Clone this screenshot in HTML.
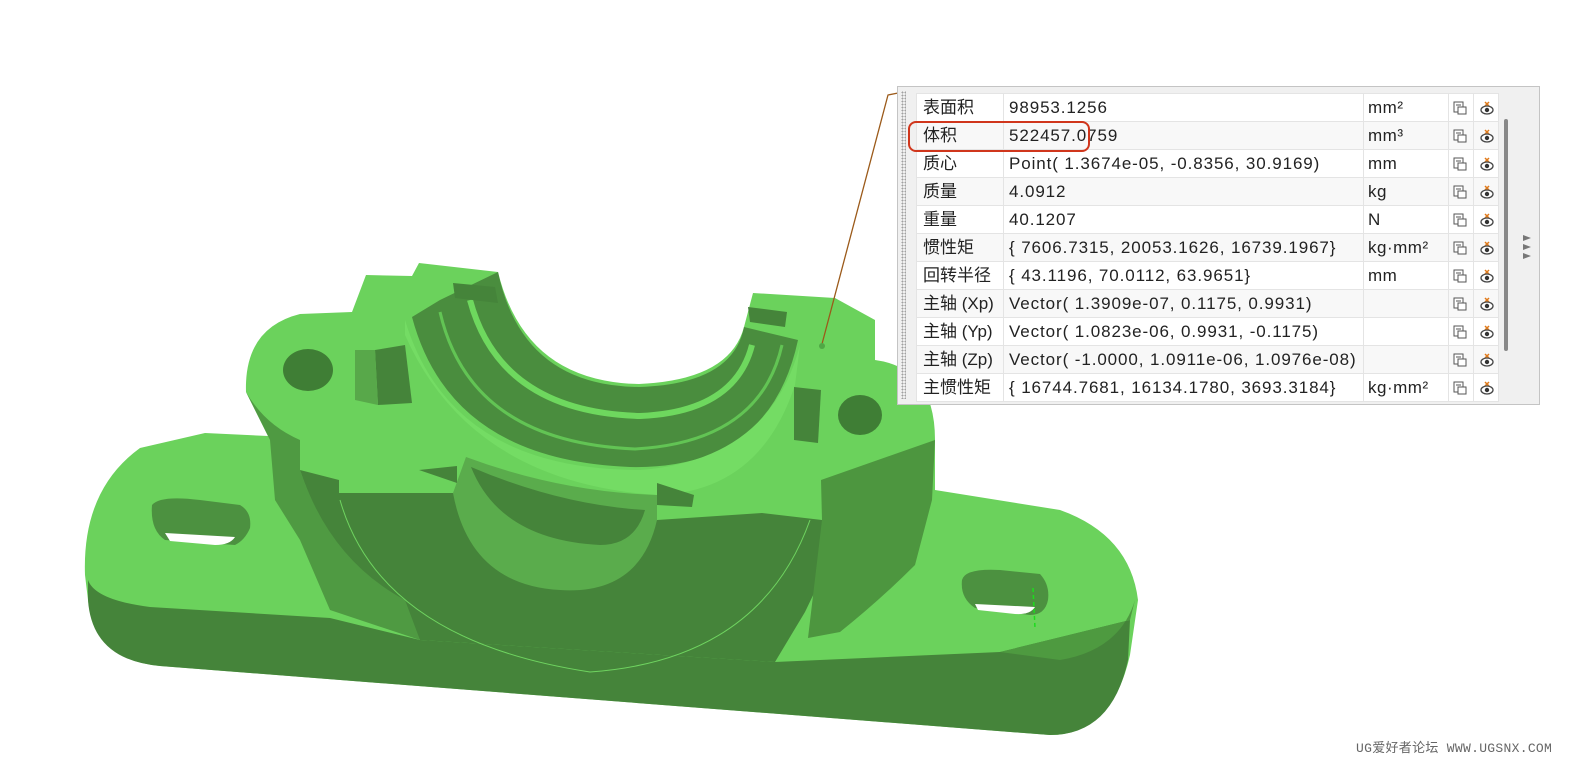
<!DOCTYPE html>
<html><head><meta charset="utf-8"><style>
body{margin:0;width:1580px;height:764px;background:#fff;position:relative;overflow:hidden;font-family:"Liberation Sans","Noto Sans CJK SC",sans-serif}
svg.bg{position:absolute;left:0;top:0}
#panel{position:absolute;left:897px;top:86px;width:643px;height:319px;background:#f0f0f0;border:1px solid #c4c4c4;box-sizing:border-box}
#grip{position:absolute;left:3px;top:4px;width:5px;height:308px;background-image:radial-gradient(#a0a0a0 40%,transparent 41%);background-size:3px 3px}
table{position:absolute;left:18px;top:6px;border-collapse:collapse;background:#fff;font-size:17px;color:#222}
td{height:26.7px;border:1px solid #e4e4e4;padding:0 4px;white-space:nowrap;line-height:27px}
td.l{width:76px;padding-left:6px}td.v{width:350px;letter-spacing:0.9px;padding-left:5px}td.u{width:76px;letter-spacing:0.5px}td.i{width:16px;padding:0 4px}
td svg{display:block}
tr:nth-child(even) td{background:#f8f8f8}
#sb{position:absolute;left:606px;top:32px;width:4px;height:232px;background:#888;border-radius:2px}
.tri{position:absolute;left:625px;width:0;height:0;border-top:3px solid transparent;border-bottom:3px solid transparent;border-left:8px solid #777}
#red{position:absolute;left:908px;top:121px;width:182px;height:31px;border:2px solid #d0361c;border-radius:8px;box-sizing:border-box}
#wm{position:absolute;left:1356px;top:737px;font-family:"Liberation Mono","Noto Sans CJK SC",monospace;font-size:13px;color:#666;letter-spacing:0.3px}
</style></head><body>
<svg class="bg" width="1580" height="764">
<path fill="#6bd25c" d="M85,575 Q82,490 140,448 L205,433 L268,436 L246,392 Q244,328 300,314 L352,312 L366,275 L412,276 L419,263 L498,272 Q525,382 639,384 Q730,380 744,327 L753,293 L835,298 L875,320 L875,360 Q935,368 935,440 L935,490 L1060,510 Q1130,535 1138,600 L1130,655 Q1112,735 1050,735 L160,666 Q95,660 88,600 Z"/>
<path fill="#45843a" d="M88,580 Q95,600 150,607 L330,618 L420,640 L775,662 L1000,652 L1130,620 L1128,660 Q1112,735 1050,735 L160,666 Q92,660 88,600 Z"/>
<path fill="#4e9a40" d="M1000,652 L1130,620 L1135,600 Q1120,650 1060,660 Z"/>
<path fill="#4f9a42" d="M246,392 L270,440 L275,500 L300,540 L330,610 L420,640 L410,600 Q330,560 300,470 L300,440 Q265,425 246,392 Z"/>
<path fill="#45843a" d="M300,470 L339,480 L339,493 L453,493 L657,520 L762,513 L822,520 L830,560 L805,612 L775,662 L420,640 L405,600 Q330,560 300,470 Z"/>
<path fill="none" stroke="#6fd460" stroke-width="1" d="M340,500 Q380,640 590,672 Q760,660 810,520"/>
<path fill="#4d963f" d="M821,480 L935,440 L932,500 L915,565 Q880,600 840,632 L808,638 L822,520 Z"/>
<!-- bowl -->
<path fill="#4a8d3e" d="M412,317 L440,300 L498,272 Q522,386 639,387 Q733,384 744,327 L798,340 Q770,470 630,467 Q450,460 412,317 Z"/>
<path fill="none" stroke="#6ed85e" stroke-width="6" d="M470,300 Q500,412 640,416 Q735,412 752,345"/>
<path fill="none" stroke="#62c454" stroke-width="3" d="M440,312 Q470,442 635,449 Q760,442 782,345"/>
<path fill="#74dc64" d="M405,320 Q450,470 640,470 Q770,460 800,345 L795,385 Q760,492 657,495 Q470,482 405,335 Z"/>
<path fill="#5aac4c" d="M453,493 Q470,585 560,590 Q640,595 657,520 L657,495 Q560,492 466,457 Z"/>
<path fill="#45843a" d="M471,467 Q500,540 600,545 Q635,545 645,510 Q560,505 471,467 Z"/>
<path fill="#45843a" d="M375,350 L405,345 L412,403 L378,405 Z"/>
<path fill="#58a84a" d="M355,350 L375,350 L378,405 L355,400 Z"/>
<path fill="#45843a" d="M453,283 L495,287 L498,303 L455,298 Z"/>
<path fill="#45843a" d="M748,307 L787,312 L785,327 L750,322 Z"/>
<path fill="#45843a" d="M794,387 L821,390 L818,443 L794,440 Z"/>
<path fill="#45843a" d="M657,483 L694,495 L692,507 L657,505 Z"/>
<path fill="#45843a" d="M419,470 L457,466 L457,483 Z"/>
<ellipse cx="308" cy="370" rx="25" ry="21" fill="#3f7e35"/>
<ellipse cx="860" cy="415" rx="22" ry="20" fill="#3f7e35"/>
<path fill="#4c9140" d="M152,505 Q160,495 200,500 L240,505 Q252,512 250,528 Q245,540 235,545 L165,540 Q150,530 152,505 Z"/>
<path fill="#fff" d="M165,533 L235,537 Q230,545 215,545 L170,541 Z"/>
<path fill="#4c9140" d="M962,580 Q965,568 1000,570 L1040,574 Q1050,585 1048,600 Q1045,615 1030,615 L975,608 Q960,598 962,580 Z"/>
<path fill="#fff" d="M975,604 L1035,607 Q1030,615 1015,614 L978,610 Z"/>
<line x1="1033" y1="588" x2="1035" y2="628" stroke="#1ddc1d" stroke-width="1.5" stroke-dasharray="4,3"/>
<polyline points="898,93 888,95 822,344" fill="none" stroke="#9b5a1a" stroke-width="1.3"/>
<circle cx="822" cy="346" r="3" fill="#4fa845"/>
</svg>
<div id="panel"><div id="grip"></div>
<table>
<tr><td class="l">表面积</td><td class="v">98953.1256</td><td class="u">mm²</td><td class="i"><svg width="14" height="14"><rect x="1" y="1" width="9" height="10" fill="#fff" stroke="#555"/><rect x="5" y="6" width="8" height="7" fill="#fff" stroke="#555"/><line x1="3" y1="4" x2="8" y2="4" stroke="#555"/></svg></td><td class="i"><svg width="16" height="14"><path d="M7,1 L11,5 M11,1 L7,5" stroke="#e07a1a" stroke-width="1.5"/><ellipse cx="9" cy="9" rx="6" ry="4" fill="#fff" stroke="#444" stroke-width="1.3"/><circle cx="9" cy="9" r="2.2" fill="#333"/></svg></td></tr>
<tr><td class="l">体积</td><td class="v">522457.0759</td><td class="u">mm³</td><td class="i"><svg width="14" height="14"><rect x="1" y="1" width="9" height="10" fill="#fff" stroke="#555"/><rect x="5" y="6" width="8" height="7" fill="#fff" stroke="#555"/><line x1="3" y1="4" x2="8" y2="4" stroke="#555"/></svg></td><td class="i"><svg width="16" height="14"><path d="M7,1 L11,5 M11,1 L7,5" stroke="#e07a1a" stroke-width="1.5"/><ellipse cx="9" cy="9" rx="6" ry="4" fill="#fff" stroke="#444" stroke-width="1.3"/><circle cx="9" cy="9" r="2.2" fill="#333"/></svg></td></tr>
<tr><td class="l">质心</td><td class="v">Point( 1.3674e-05, -0.8356, 30.9169)</td><td class="u">mm</td><td class="i"><svg width="14" height="14"><rect x="1" y="1" width="9" height="10" fill="#fff" stroke="#555"/><rect x="5" y="6" width="8" height="7" fill="#fff" stroke="#555"/><line x1="3" y1="4" x2="8" y2="4" stroke="#555"/></svg></td><td class="i"><svg width="16" height="14"><path d="M7,1 L11,5 M11,1 L7,5" stroke="#e07a1a" stroke-width="1.5"/><ellipse cx="9" cy="9" rx="6" ry="4" fill="#fff" stroke="#444" stroke-width="1.3"/><circle cx="9" cy="9" r="2.2" fill="#333"/></svg></td></tr>
<tr><td class="l">质量</td><td class="v">4.0912</td><td class="u">kg</td><td class="i"><svg width="14" height="14"><rect x="1" y="1" width="9" height="10" fill="#fff" stroke="#555"/><rect x="5" y="6" width="8" height="7" fill="#fff" stroke="#555"/><line x1="3" y1="4" x2="8" y2="4" stroke="#555"/></svg></td><td class="i"><svg width="16" height="14"><path d="M7,1 L11,5 M11,1 L7,5" stroke="#e07a1a" stroke-width="1.5"/><ellipse cx="9" cy="9" rx="6" ry="4" fill="#fff" stroke="#444" stroke-width="1.3"/><circle cx="9" cy="9" r="2.2" fill="#333"/></svg></td></tr>
<tr><td class="l">重量</td><td class="v">40.1207</td><td class="u">N</td><td class="i"><svg width="14" height="14"><rect x="1" y="1" width="9" height="10" fill="#fff" stroke="#555"/><rect x="5" y="6" width="8" height="7" fill="#fff" stroke="#555"/><line x1="3" y1="4" x2="8" y2="4" stroke="#555"/></svg></td><td class="i"><svg width="16" height="14"><path d="M7,1 L11,5 M11,1 L7,5" stroke="#e07a1a" stroke-width="1.5"/><ellipse cx="9" cy="9" rx="6" ry="4" fill="#fff" stroke="#444" stroke-width="1.3"/><circle cx="9" cy="9" r="2.2" fill="#333"/></svg></td></tr>
<tr><td class="l">惯性矩</td><td class="v">{ 7606.7315, 20053.1626, 16739.1967}</td><td class="u">kg·mm²</td><td class="i"><svg width="14" height="14"><rect x="1" y="1" width="9" height="10" fill="#fff" stroke="#555"/><rect x="5" y="6" width="8" height="7" fill="#fff" stroke="#555"/><line x1="3" y1="4" x2="8" y2="4" stroke="#555"/></svg></td><td class="i"><svg width="16" height="14"><path d="M7,1 L11,5 M11,1 L7,5" stroke="#e07a1a" stroke-width="1.5"/><ellipse cx="9" cy="9" rx="6" ry="4" fill="#fff" stroke="#444" stroke-width="1.3"/><circle cx="9" cy="9" r="2.2" fill="#333"/></svg></td></tr>
<tr><td class="l">回转半径</td><td class="v">{ 43.1196, 70.0112, 63.9651}</td><td class="u">mm</td><td class="i"><svg width="14" height="14"><rect x="1" y="1" width="9" height="10" fill="#fff" stroke="#555"/><rect x="5" y="6" width="8" height="7" fill="#fff" stroke="#555"/><line x1="3" y1="4" x2="8" y2="4" stroke="#555"/></svg></td><td class="i"><svg width="16" height="14"><path d="M7,1 L11,5 M11,1 L7,5" stroke="#e07a1a" stroke-width="1.5"/><ellipse cx="9" cy="9" rx="6" ry="4" fill="#fff" stroke="#444" stroke-width="1.3"/><circle cx="9" cy="9" r="2.2" fill="#333"/></svg></td></tr>
<tr><td class="l">主轴 (Xp)</td><td class="v">Vector( 1.3909e-07, 0.1175, 0.9931)</td><td class="u"></td><td class="i"><svg width="14" height="14"><rect x="1" y="1" width="9" height="10" fill="#fff" stroke="#555"/><rect x="5" y="6" width="8" height="7" fill="#fff" stroke="#555"/><line x1="3" y1="4" x2="8" y2="4" stroke="#555"/></svg></td><td class="i"><svg width="16" height="14"><path d="M7,1 L11,5 M11,1 L7,5" stroke="#e07a1a" stroke-width="1.5"/><ellipse cx="9" cy="9" rx="6" ry="4" fill="#fff" stroke="#444" stroke-width="1.3"/><circle cx="9" cy="9" r="2.2" fill="#333"/></svg></td></tr>
<tr><td class="l">主轴 (Yp)</td><td class="v">Vector( 1.0823e-06, 0.9931, -0.1175)</td><td class="u"></td><td class="i"><svg width="14" height="14"><rect x="1" y="1" width="9" height="10" fill="#fff" stroke="#555"/><rect x="5" y="6" width="8" height="7" fill="#fff" stroke="#555"/><line x1="3" y1="4" x2="8" y2="4" stroke="#555"/></svg></td><td class="i"><svg width="16" height="14"><path d="M7,1 L11,5 M11,1 L7,5" stroke="#e07a1a" stroke-width="1.5"/><ellipse cx="9" cy="9" rx="6" ry="4" fill="#fff" stroke="#444" stroke-width="1.3"/><circle cx="9" cy="9" r="2.2" fill="#333"/></svg></td></tr>
<tr><td class="l">主轴 (Zp)</td><td class="v">Vector( -1.0000, 1.0911e-06, 1.0976e-08)</td><td class="u"></td><td class="i"><svg width="14" height="14"><rect x="1" y="1" width="9" height="10" fill="#fff" stroke="#555"/><rect x="5" y="6" width="8" height="7" fill="#fff" stroke="#555"/><line x1="3" y1="4" x2="8" y2="4" stroke="#555"/></svg></td><td class="i"><svg width="16" height="14"><path d="M7,1 L11,5 M11,1 L7,5" stroke="#e07a1a" stroke-width="1.5"/><ellipse cx="9" cy="9" rx="6" ry="4" fill="#fff" stroke="#444" stroke-width="1.3"/><circle cx="9" cy="9" r="2.2" fill="#333"/></svg></td></tr>
<tr><td class="l">主惯性矩</td><td class="v">{ 16744.7681, 16134.1780, 3693.3184}</td><td class="u">kg·mm²</td><td class="i"><svg width="14" height="14"><rect x="1" y="1" width="9" height="10" fill="#fff" stroke="#555"/><rect x="5" y="6" width="8" height="7" fill="#fff" stroke="#555"/><line x1="3" y1="4" x2="8" y2="4" stroke="#555"/></svg></td><td class="i"><svg width="16" height="14"><path d="M7,1 L11,5 M11,1 L7,5" stroke="#e07a1a" stroke-width="1.5"/><ellipse cx="9" cy="9" rx="6" ry="4" fill="#fff" stroke="#444" stroke-width="1.3"/><circle cx="9" cy="9" r="2.2" fill="#333"/></svg></td></tr>
</table>
<div id="sb"></div>
<div class="tri" style="top:148px"></div><div class="tri" style="top:157px"></div><div class="tri" style="top:166px"></div>
</div>
<div id="red"></div>
<div id="wm">UG爱好者论坛 WWW.UGSNX.COM</div>
</body></html>
